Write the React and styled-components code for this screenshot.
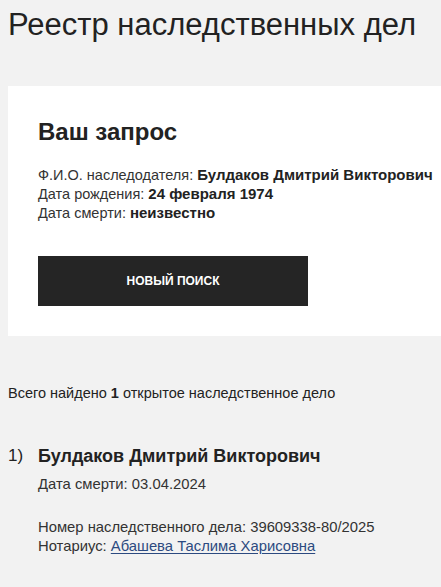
import styled, { createGlobalStyle } from "styled-components";

const Global = createGlobalStyle`
  html, body {
    margin: 0;
    padding: 0;
    background: #f2f2f2;
  }
  body {
    font-family: "Liberation Sans", Arial, sans-serif;
    color: #222;
  }
`;

const Page = styled.div`
  padding: 7px 0 40px 8px;
`;

const Title = styled.h1`
  margin: 0;
  font-size: 31px;
  line-height: 36px;
  font-weight: 400;
  color: #222;
  white-space: nowrap;
`;

const Card = styled.section`
  margin-top: 43px;
  background: #fff;
  padding: 31px 0 30px 30px;
`;

const CardTitle = styled.h2`
  margin: 0;
  font-size: 24px;
  line-height: 29px;
  font-weight: 700;
`;

const Info = styled.div`
  margin-top: 20px;
  font-size: 14.5px;
  line-height: 19px;
  color: #333;
  white-space: nowrap;
`;

const InfoRow = styled.div`
  height: 19px;

  b {
    font-size: 15px;
    line-height: 1;
    color: #222;
  }
`;

const Button = styled.button`
  display: block;
  margin-top: 33px;
  width: 270px;
  height: 50px;
  border: none;
  background: #252525;
  color: #fff;
  font-family: inherit;
  font-size: 12px;
  font-weight: 700;
  text-transform: uppercase;
  cursor: pointer;
`;

const Summary = styled.p`
  margin: 48px 0 0;
  font-size: 14.5px;
  line-height: 18px;
`;

const Results = styled.ol`
  list-style: none;
  margin: 43px 0 0;
  padding: 0;
`;

const Item = styled.li`
  display: grid;
  grid-template-columns: 30px 1fr;
`;

const Num = styled.span`
  font-size: 17px;
  line-height: 22px;
`;

const Name = styled.div`
  font-size: 18px;
  line-height: 22px;
  font-weight: 700;
`;

const Line = styled.div`
  font-size: 14.8px;
  line-height: 19px;
  color: #333;
  margin-top: ${(p) => p.gap || 0}px;
`;

const Link = styled.a`
  color: #2c4a80;
  text-decoration: underline;
  text-underline-offset: 2px;
`;

const results = [
  {
    name: "Булдаков Дмитрий Викторович",
    death: "03.04.2024",
    number: "39609338-80/2025",
    notary: "Абашева Таслима Харисовна",
  },
];

export default function App() {
  return (
    <Page>
      <Global />
      <Title>Реестр наследственных дел</Title>
      <Card>
        <CardTitle>Ваш запрос</CardTitle>
        <Info>
          <InfoRow>
            Ф.И.О. наследодателя: <b>Булдаков Дмитрий Викторович</b>
          </InfoRow>
          <InfoRow>
            Дата рождения: <b>24 февраля 1974</b>
          </InfoRow>
          <InfoRow>
            Дата смерти: <b>неизвестно</b>
          </InfoRow>
        </Info>
        <Button>Новый поиск</Button>
      </Card>
      <Summary>
        Всего найдено <b>1</b> открытое наследственное дело
      </Summary>
      <Results>
        {results.map((r, i) => (
          <Item key={r.number}>
            <Num>{i + 1})</Num>
            <div>
              <Name>{r.name}</Name>
              <Line gap={8}>Дата смерти: {r.death}</Line>
              <Line gap={24}>Номер наследственного дела: {r.number}</Line>
              <Line>
                Нотариус: <Link href="#">{r.notary}</Link>
              </Line>
            </div>
          </Item>
        ))}
      </Results>
    </Page>
  );
}
